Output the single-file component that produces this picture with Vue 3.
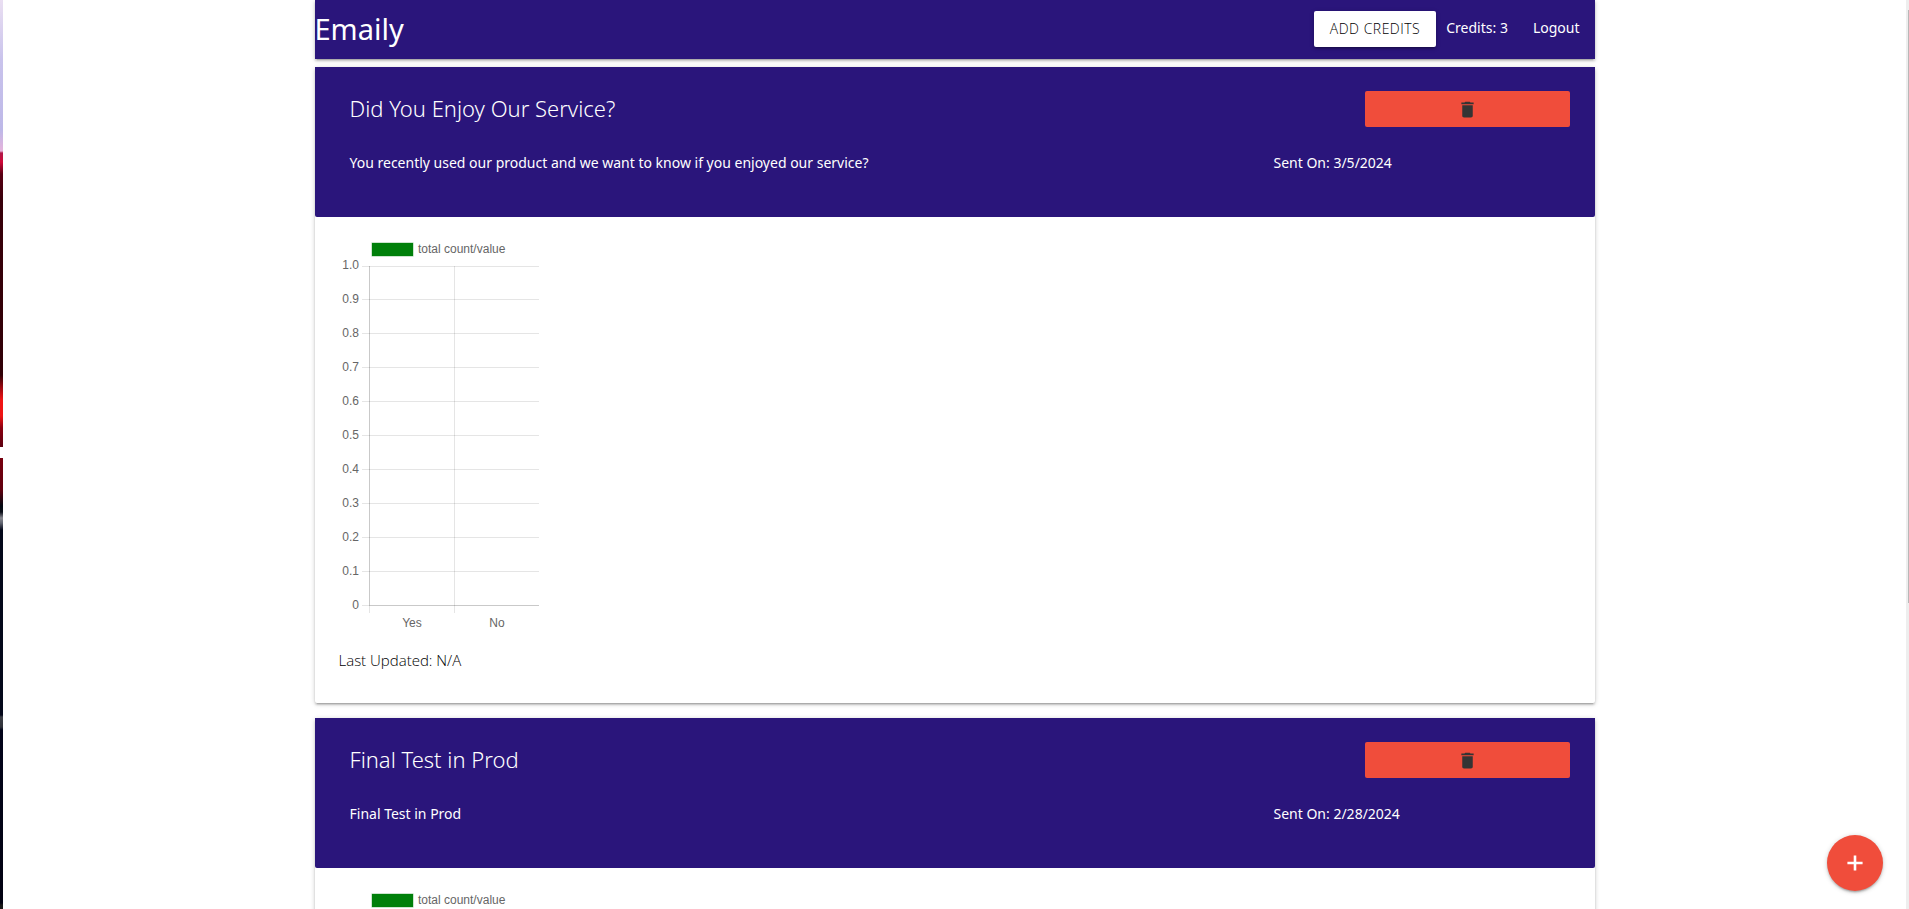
<script setup>
const surveys = [
  {
    id: 1,
    title: 'Did You Enjoy Our Service?',
    body: 'You recently used our product and we want to know if you enjoyed our service?',
    sent: '3/5/2024',
  },
  { id: 2, title: 'Final Test in Prod', body: 'Final Test in Prod', sent: '2/28/2024' },
]

const ticks = Array.from({ length: 11 }, (_, i) => ({
  label: i === 0 ? '1.0' : i === 10 ? '0' : (1 - i / 10).toFixed(1),
  y: i === 0 ? 25 : Math.floor(364 - (10 - i) * 33.9),
}))
</script>

<template>
  <div class="screen">
    <div class="edge" aria-hidden="true"></div>
    <main class="page">
      <div class="container">
        <nav class="nav">
          <a class="brand" href="#">Emaily</a>
          <div class="links">
            <button class="btn credits-btn" type="button">Add Credits</button>
            <span class="credits">Credits: 3</span>
            <a class="logout" href="#">Logout</a>
          </div>
        </nav>

        <article v-for="s in surveys" :key="s.id" class="card">
          <header class="card-head">
            <div class="row title-row">
              <h2 class="title">{{ s.title }}</h2>
              <button class="btn delete" type="button" aria-label="Delete survey">
                <svg class="trash" viewBox="0 0 24 24">
                  <path d="M6 19c0 1.1.9 2 2 2h8c1.1 0 2-.9 2-2V7H6v12zM19 4h-3.5l-1-1h-5l-1 1H5v2h14V4z" />
                </svg>
              </button>
            </div>
            <div class="row text-row">
              <p>{{ s.body }}</p>
              <p>Sent On: {{ s.sent }}</p>
            </div>
          </header>
          <div class="card-body">
            <svg class="chart" viewBox="0 0 200 400" role="img" aria-label="total count/value">
              <rect class="swatch" x="33" y="2" width="41" height="13" />
              <text x="79" y="12">total count/value</text>
              <g v-for="t in ticks" :key="t.label">
                <rect class="grid" x="23" :y="t.y" width="177" height="1" />
                <text class="tick" x="20" :y="t.y + (t.label === '1.0' ? 3 : 4)">{{ t.label }}</text>
              </g>
              <rect class="grid" x="30" y="25" width="1" height="347" />
              <rect class="grid" x="115" y="25" width="1" height="347" />
              <rect class="axis" x="30" y="25" width="1" height="339" />
              <rect class="axis" x="30" y="364" width="170" height="1" />
              <text class="name" x="73" y="386">Yes</text>
              <text class="name" x="158" y="386">No</text>
            </svg>
            <p class="updated">Last Updated: N/A</p>
          </div>
        </article>
      </div>
      <button class="fab" type="button" aria-label="New survey">
        <svg viewBox="0 0 24 24"><path d="M19 13.2h-5.8V19h-2.4v-5.8H5v-2.4h5.8V5h2.4v5.8H19z" /></svg>
      </button>
    </main>
    <div class="track" aria-hidden="true"><div class="thumb"></div></div>
  </div>
</template>

<style>
body {
  background: #fff;
}
</style>

<style scoped>
.screen {
  display: grid;
  grid-template-columns: 3px minmax(0, 1fr) 3px;
  height: 100vh;
  overflow: hidden;
  font-family: "Noto Sans", "Open Sans", sans-serif;
  font-size: 14px;
  line-height: 22px;
  color: rgba(0, 0, 0, 0.87);
}
.edge {
  background: linear-gradient(
    #eadff2 0, #c9c3ec 60px, #bdb8e8 130px, #e6b4dc 151px, #b01848 153px, #d00838 162px,
    #5a0014 174px, #38000a 200px, #300006 375px, #a00810 388px, #f01414 400px, #ee1414 416px,
    #8a0010 428px, #5c0010 447px, #fff 447px, #fff 458px, #78000f 458px, #60000f 490px,
    #020812 506px, #0a0e18 512px, #888890 518px, #606470 523px, #04081a 530px, #04081a 715px,
    #3c3e46 717px, #30323a 727px, #02041a 730px, #020212 903px, #181818 905px
  );
}
.page {
  min-width: 0;
  overflow-y: auto;
  scrollbar-width: none;
}
.track {
  background: #eee;
  padding-top: 10px;
}
.thumb {
  height: 66%;
  margin-left: 2px;
  background: #b8b8b8;
}
.container {
  width: 90%;
  max-width: 1280px;
  margin: 0 auto;
}
.nav {
  display: flex;
  justify-content: space-between;
  align-items: flex-start;
  height: 59px;
  background: #2a157b;
  color: #fff;
  box-shadow: 0 2px 2px 0 rgba(0, 0, 0, 0.14), 0 3px 1px -2px rgba(0, 0, 0, 0.12),
    0 1px 5px 0 rgba(0, 0, 0, 0.2);
}
.nav a {
  color: #fff;
  text-decoration: none;
}
.brand {
  font-size: 29px;
  line-height: 58px;
}
.links {
  display: flex;
  line-height: 56px;
}
.btn {
  height: 36px;
  padding: 0 16px;
  border: 0;
  border-radius: 2px;
  font: inherit;
  cursor: pointer;
}
.credits-btn {
  margin: 11px 10px 0 0;
  background: #fff;
  color: #000;
  font-family: "Open Sans", "Noto Sans", sans-serif;
  font-weight: 300;
  line-height: 36px;
  letter-spacing: 0.5px;
  text-transform: uppercase;
  box-shadow: 0 2px 2px 0 rgba(0, 0, 0, 0.14), 0 3px 1px -2px rgba(0, 0, 0, 0.12),
    0 1px 5px 0 rgba(0, 0, 0, 0.2);
}
.logout {
  padding: 0 15px 0 25px;
}
.card {
  margin: 8px 0 15px;
  border-radius: 2px;
  background: #fff;
  box-shadow: 0 2px 2px 0 rgba(0, 0, 0, 0.14), 0 3px 1px -2px rgba(0, 0, 0, 0.12),
    0 1px 5px 0 rgba(0, 0, 0, 0.2);
}
.card-head {
  height: 150px;
  box-sizing: border-box;
  padding: 24px;
  border-radius: 0 0 2px 2px;
  background: #2a157b;
  color: #fff;
}
.row {
  display: grid;
}
.title-row {
  grid-template-columns: 10fr 2fr;
}
.text-row {
  grid-template-columns: 9fr 3fr;
  margin-top: 25px;
}
.title {
  margin: 0;
  padding: 0 11px;
  font-family: "Noto Sans", "Open Sans", sans-serif;
  font-size: 22px;
  font-weight: 300;
  line-height: 34px;
}
.delete {
  display: flex;
  align-items: center;
  justify-content: center;
  background: #f04d3b;
}
.trash {
  width: 21px;
  height: 21px;
  fill: #343434;
}
p {
  margin: 0;
}
.text-row p {
  padding: 0 11px;
}
.card-body {
  padding: 24px;
}
.chart {
  display: block;
  width: 200px;
  height: 400px;
  font-family: "Liberation Sans", Arial, sans-serif;
  font-size: 12px;
  fill: #666;
}
.swatch {
  fill: #00800a;
  stroke: rgba(0, 128, 10, 0.4);
  stroke-width: 1px;
}
.grid {
  fill: rgba(0, 0, 0, 0.1);
}
.axis {
  fill: rgba(0, 0, 0, 0.12);
}
.tick {
  text-anchor: end;
}
.name {
  text-anchor: middle;
}
.updated {
  font-family: "Open Sans", "Noto Sans", sans-serif;
  font-size: 15px;
  font-weight: 300;
  line-height: 38px;
  color: #000;
}
.fab {
  position: fixed;
  right: 26px;
  bottom: 18px;
  display: flex;
  align-items: center;
  justify-content: center;
  width: 56px;
  height: 56px;
  padding: 0;
  border: 0;
  border-radius: 50%;
  background: #f04d3b;
  cursor: pointer;
  box-shadow: 0 2px 2px 0 rgba(0, 0, 0, 0.14), 0 3px 1px -2px rgba(0, 0, 0, 0.12),
    0 1px 5px 0 rgba(0, 0, 0, 0.2);
}
.fab svg {
  width: 26px;
  height: 26px;
  fill: #fff;
}
</style>
